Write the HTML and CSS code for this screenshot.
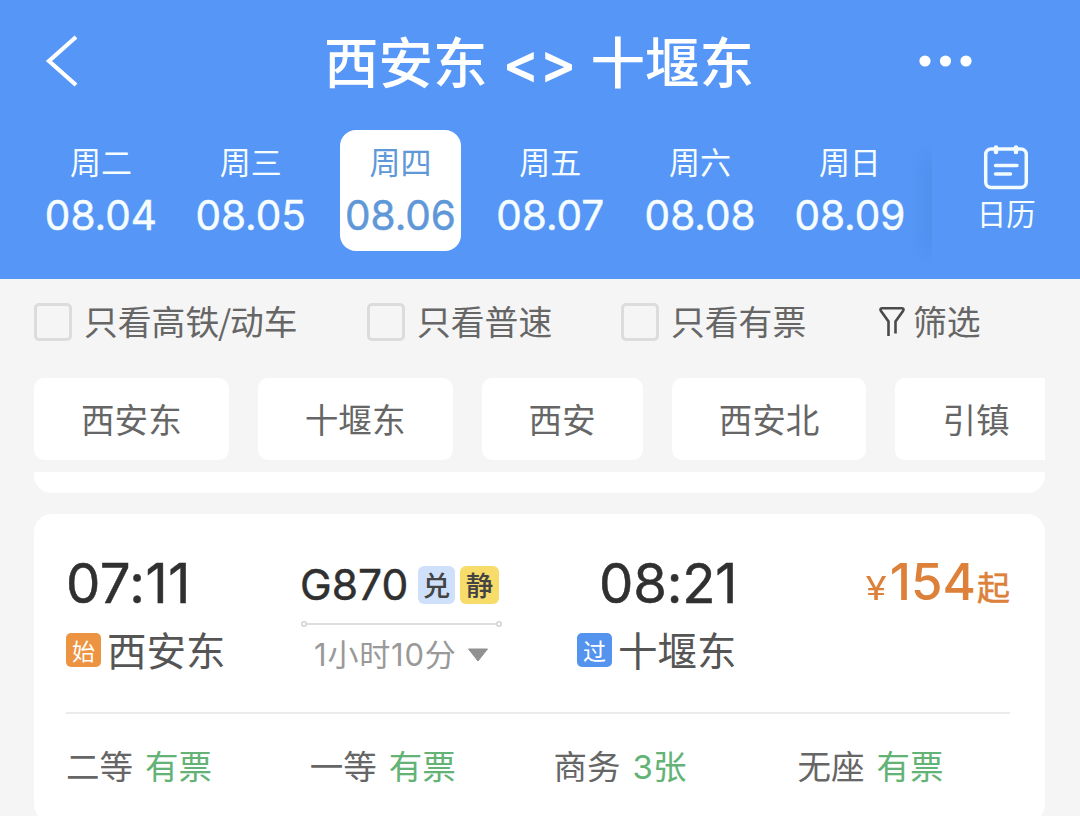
FILE: index.html
```html
<!DOCTYPE html>
<html lang="zh-CN">
<head>
<meta charset="utf-8">
<title>西安东 - 十堰东</title>
<link rel="stylesheet" href="styles.css">
</head>
<body>
<header class="header">
  <div class="navbar">
    <svg class="back" width="36" height="56" viewBox="0 0 36 56"><path d="M32 4 L5 28 L32 52" fill="none" stroke="#fff" stroke-width="4.2"/></svg>
    <h1 class="title"><span>西安东</span><span class="arrows">&lt;&gt;</span><span>十堰东</span></h1>
    <svg class="more" width="56" height="16" viewBox="0 0 56 16"><g fill="#fff"><circle cx="7" cy="8" r="5.600"/><circle cx="27.500" cy="8" r="5.600"/><circle cx="48" cy="8" r="5.600"/></g></svg>
  </div>
  <div class="datebar">
    <div class="days">
      <div class="day"><span class="week">周二</span><span class="date">08.04</span></div>
      <div class="day"><span class="week">周三</span><span class="date">08.05</span></div>
      <div class="day selected"><span class="week">周四</span><span class="date">08.06</span></div>
      <div class="day"><span class="week">周五</span><span class="date">08.07</span></div>
      <div class="day"><span class="week">周六</span><span class="date">08.08</span></div>
      <div class="day"><span class="week">周日</span><span class="date">08.09</span></div>
    </div>
    <div class="shade"></div>
    <div class="calendar">
      <svg width="46" height="46" viewBox="0 0 46 46" fill="none" stroke="#f2fcff" stroke-width="3.500" stroke-linecap="round"><rect x="2.700" y="5" width="40.600" height="38.500" rx="5.500"/><path d="M13 3.500V8 M33 3.500V8" stroke-width="4.500"/><path d="M12.500 21.500H34 M12.500 30H27.500"/></svg>
      <span class="callabel">日历</span>
    </div>
  </div>
</header>
<section class="filters">
  <label class="check c1"><i class="box"></i><span>只看高铁<span class="slash">/</span>动车</span></label>
  <label class="check c2"><i class="box"></i><span>只看普速</span></label>
  <label class="check c3"><i class="box"></i><span>只看有票</span></label>
  <div class="sift"><svg width="26" height="32" viewBox="0 0 26 32"><path d="M9.500 30V15.500L2 5Q.5 2.300 3.500 2.300H22.500Q25.500 2.300 24 5L16.500 15.500V27.500" fill="none" stroke="#4a4a4a" stroke-width="2.600"/></svg><span>筛选</span></div>
</section>
<nav class="chips">
  <span class="chip">西安东</span><span class="chip">十堰东</span><span class="chip">西安</span><span class="chip">西安北</span><span class="chip">引镇</span>
</nav>
<div class="previous"></div>
<article class="card">
  <div class="trip">
    <div class="end from">
      <span class="time t1">07:11</span>
      <div class="station"><i class="badge orange">始</i><span>西安东</span></div>
    </div>
    <div class="middle">
      <div class="train"><span class="number">G870</span><i class="tag blue">兑</i><i class="tag yellow">静</i></div>
      <svg class="track" width="202" height="8" viewBox="0 0 202 8" fill="none" stroke="#d3d3d3" stroke-width="1.600"><circle cx="4" cy="4" r="2.200"/><path d="M6.500 4H196.500"/><circle cx="199" cy="4" r="2.200"/></svg>
      <div class="duration"><span>1小时10分</span><svg width="22" height="14" viewBox="0 0 22 14"><path d="M1.500 1H20.500L11 13Z" fill="#919191" stroke="#919191" stroke-linejoin="round"/></svg></div>
    </div>
    <div class="end to">
      <span class="time t2">08:21</span>
      <div class="station"><i class="badge azure">过</i><span>十堰东</span></div>
    </div>
    <div class="price"><span class="yen">¥</span><span class="amount">154</span><span class="from-label">起</span></div>
  </div>
  <div class="seats">
    <div class="seat"><span>二等</span><span class="left">有票</span></div>
    <div class="seat"><span>一等</span><span class="left">有票</span></div>
    <div class="seat"><span>商务</span><span class="left"><span class="count">3</span>张</span></div>
    <div class="seat"><span>无座</span><span class="left">有票</span></div>
  </div>
</article>
</body>
</html>
```

FILE: styles.css
```css
* { box-sizing: border-box; }
body {
  margin: 0;
  width: 1080px;
  height: 816px;
  overflow: hidden;
  background: #f5f5f5;
  color: #666;
  font-family: "Noto Sans CJK SC", sans-serif;
  white-space: nowrap;
}
svg { display: block; flex: none; }
i { font-style: normal; }

.header { height: 279px; background: #5596f6; color: #f5fdff; }
.navbar {
  height: 130px;
  display: grid;
  grid-template-columns: 324px 430px 1fr;
  align-items: start;
}
.back { margin: 33px 0 0 44px; }
.title {
  margin: 28px 0 0;
  display: flex;
  font-size: 54.500px;
  line-height: 64px;
  font-weight: 500;
  color: #fff;
}
.arrows {
  width: 70px;
  margin: 3px 16px 0 17px;
  display: flex;
  justify-content: center;
  font-family: Inter, sans-serif;
  font-size: 55px;
  font-weight: 600;
}
.more { margin: 53px 0 0 164px; }

.datebar { display: flex; height: 149px; }
.days { display: flex; gap: 28.800px; padding-left: 40.400px; }
.day {
  width: 121px;
  height: 121px;
  border-radius: 16px;
  display: flex;
  flex-direction: column;
  align-items: center;
}
.selected { background: #fff; color: #5f98d8; }
.week { margin-top: 13px; font-size: 31px; line-height: 36px; }
.date {
  margin-top: 13px;
  font-family: Inter, sans-serif;
  font-size: 40.500px;
  line-height: 48px;
  -webkit-text-stroke: 0.5px currentColor;
}
.shade {
  width: 20px;
  height: 120px;
  margin: 14px 0 0 2px;
  background: linear-gradient(90deg, transparent, #5090ec);
  -webkit-mask-image: linear-gradient(transparent, #000 25%, #000 75%, transparent);
}
.calendar {
  flex: 1;
  display: flex;
  flex-direction: column;
  align-items: center;
  padding-top: 14px;
}
.callabel { font-size: 29.500px; line-height: 36px; margin-top: 4px; }

.filters {
  height: 99px;
  padding: 22px 0 0 34px;
  display: flex;
  font-size: 33.800px;
  line-height: 40px;
}
.check { display: flex; }
.c1 { width: 333px; }
.c2 { width: 254px; }
.c3 { width: 258px; }
.slash { margin: 0 -1.200px; }
.box {
  width: 38px;
  height: 38px;
  margin: 2px 12px 0 0;
  border: 3px solid #dcdcdc;
  border-radius: 5px;
}
.sift { display: flex; gap: 8px; }
.sift svg { margin-top: 5px; }

.chips {
  display: flex;
  gap: 29px;
  width: 1011px;
  height: 82px;
  margin-left: 34px;
  overflow: hidden;
}
.chip {
  flex: none;
  padding: 0 47px;
  border-radius: 10px;
  background: #fff;
  font-size: 33.600px;
  line-height: 81px;
}
.previous {
  width: 1011px;
  height: 21px;
  margin: 12px 0 21px 34px;
  border-radius: 0 0 18px 18px;
  background: #fff;
}
.card {
  width: 1011px;
  height: 308px;
  margin-left: 34px;
  padding: 0 35px 0 32px;
  border-radius: 18px;
  background: #fff;
}
.trip {
  display: grid;
  grid-template-columns: 234px 277px 1fr auto;
  height: 200px;
  border-bottom: 2px solid #ebebeb;
}
.time {
  display: block;
  margin-top: 38px;
  font-family: Inter, sans-serif;
  font-size: 54.500px;
  line-height: 62px;
  color: #303030;
  -webkit-text-stroke: 0.5px currentColor;
}
.t1 { letter-spacing: 0.5px; }
.t2 { margin-left: 22px; letter-spacing: -0.2px; }
.station {
  display: flex;
  margin-top: 11px;
  font-size: 39.500px;
  line-height: 48px;
  color: #555;
}
.badge {
  width: 35px;
  height: 34px;
  margin: 8px 6px 0 0;
  border-radius: 5px;
  font-size: 23px;
  line-height: 34px;
  text-align: center;
  color: #fff;
}
.orange { background: #ed9443; }
.azure { background: #5594ee; }
.train { display: flex; margin-top: 48px; }
.number {
  width: 118px;
  font-family: Inter, sans-serif;
  font-size: 42.500px;
  line-height: 46px;
  color: #303030;
  -webkit-text-stroke: 0.5px currentColor;
}
.tag {
  width: 37px;
  height: 38px;
  margin: 4px 5px 0 0;
  border-radius: 6px;
  font-size: 27.500px;
  line-height: 36px;
  text-align: center;
  color: #444;
  font-weight: 500;
}
.blue { background: #cfe0fb; }
.yellow { width: 39px; background: #f7dc69; }
.track { margin-top: 12px; }
.duration {
  display: flex;
  gap: 10px;
  margin: 7px 0 0 14px;
  font-family: Inter, "Noto Sans CJK SC", sans-serif;
  font-size: 31px;
  line-height: 40px;
  letter-spacing: 0.8px;
  color: #999;
}
.duration svg { margin-top: 13px; }
.price {
  display: flex;
  align-items: baseline;
  height: 60px;
  margin-top: 35px;
  color: #dc803a;
  font-family: Inter, sans-serif;
  font-weight: 500;
}
.yen {
  margin-right: 3px;
  font-size: 32px;
  font-weight: 400;
  transform: scaleX(1.2);
  transform-origin: right;
}
.amount { font-size: 51px; line-height: 66px; }
.from-label {
  margin-left: 1px;
  font-family: "Noto Sans CJK SC", sans-serif;
  font-size: 33px;
  font-weight: 400;
  -webkit-text-stroke: 0.5px currentColor;
}
.seats { display: flex; padding-top: 30px; }
.seat {
  flex: none;
  display: flex;
  gap: 12px;
  width: 243.800px;
  font-size: 33.500px;
  line-height: 42px;
}
.left { color: #63b276; }
.count { font-family: Inter, sans-serif; font-size: 33px; line-height: 1; }
```
